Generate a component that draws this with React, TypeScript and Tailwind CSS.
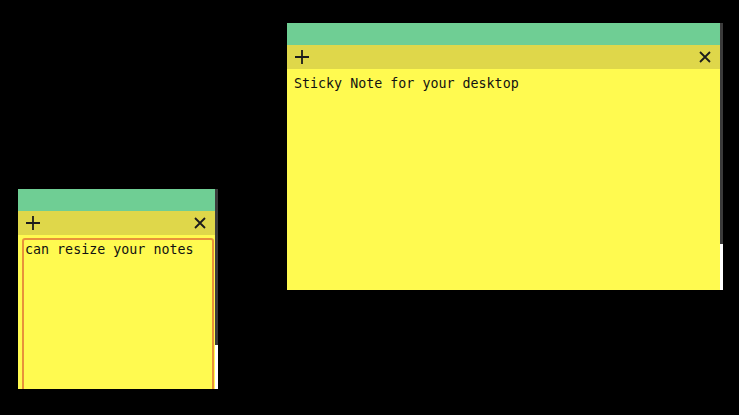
import React from "react";

interface NoteProps {
	pos: string;
	size: string;
	shade: string;
	text: string;
	focused?: boolean;
}

function PlusIcon() {
	return (
		<svg width="14" height="14" viewBox="0 0 14 14" aria-hidden="true">
			<path d="M0 7H14M7 0V14" stroke="#1c1c1c" strokeWidth="1.8" />
		</svg>
	);
}

function CloseIcon() {
	return (
		<svg width="12" height="12" viewBox="0 0 12 12" aria-hidden="true">
			<path d="M1 1L11 11M11 1L1 11" stroke="#1c1c1c" strokeWidth="1.8" />
		</svg>
	);
}

function Note({ pos, size, shade, text, focused }: NoteProps) {
	return (
		<div className={`absolute flex ${pos}`}>
			<div className={`flex flex-col overflow-hidden bg-[#fffa50] ${size}`}>
				{/* drag bar */}
				<div className="h-[22px] shrink-0 bg-[#6fce94]" />
				{/* toolbar */}
				<div className="flex h-[24px] shrink-0 items-center justify-between bg-[#dfd74a] pl-[8px] pr-[9px]">
					<PlusIcon />
					<CloseIcon />
				</div>
				<div className="flex-1 overflow-hidden pl-[4px] pr-[1px] pt-[3px]">
					<textarea
						readOnly
						value={text}
						className={`block h-[calc(100%+10px)] w-full resize-none rounded-[3px] bg-transparent pl-[3px] pt-[2px] font-['DejaVu_Sans_Mono',monospace] text-[13.33px] leading-normal text-[#111] ${
							focused
								? "outline-2 -outline-offset-2 outline-solid outline-[#e8923a]"
								: "outline-none"
						}`}
					/>
				</div>
			</div>
			{/* edge strip */}
			<div className="flex w-[3px] flex-col">
				<div className={`bg-[#3b3b3b] ${shade}`} />
				<div className="flex-1 bg-white" />
			</div>
		</div>
	);
}

export default function App() {
	return (
		<div className="relative h-screen w-full overflow-hidden bg-black">
			<Note
				pos="left-[287px] top-[23px]"
				size="w-[433px] h-[267px]"
				shade="h-[221px]"
				text="Sticky Note for your desktop"
			/>
			<Note
				pos="left-[18px] top-[189px]"
				size="w-[197px] h-[200px]"
				shade="h-[156px]"
				text="can resize your notes"
				focused
			/>
		</div>
	);
}
